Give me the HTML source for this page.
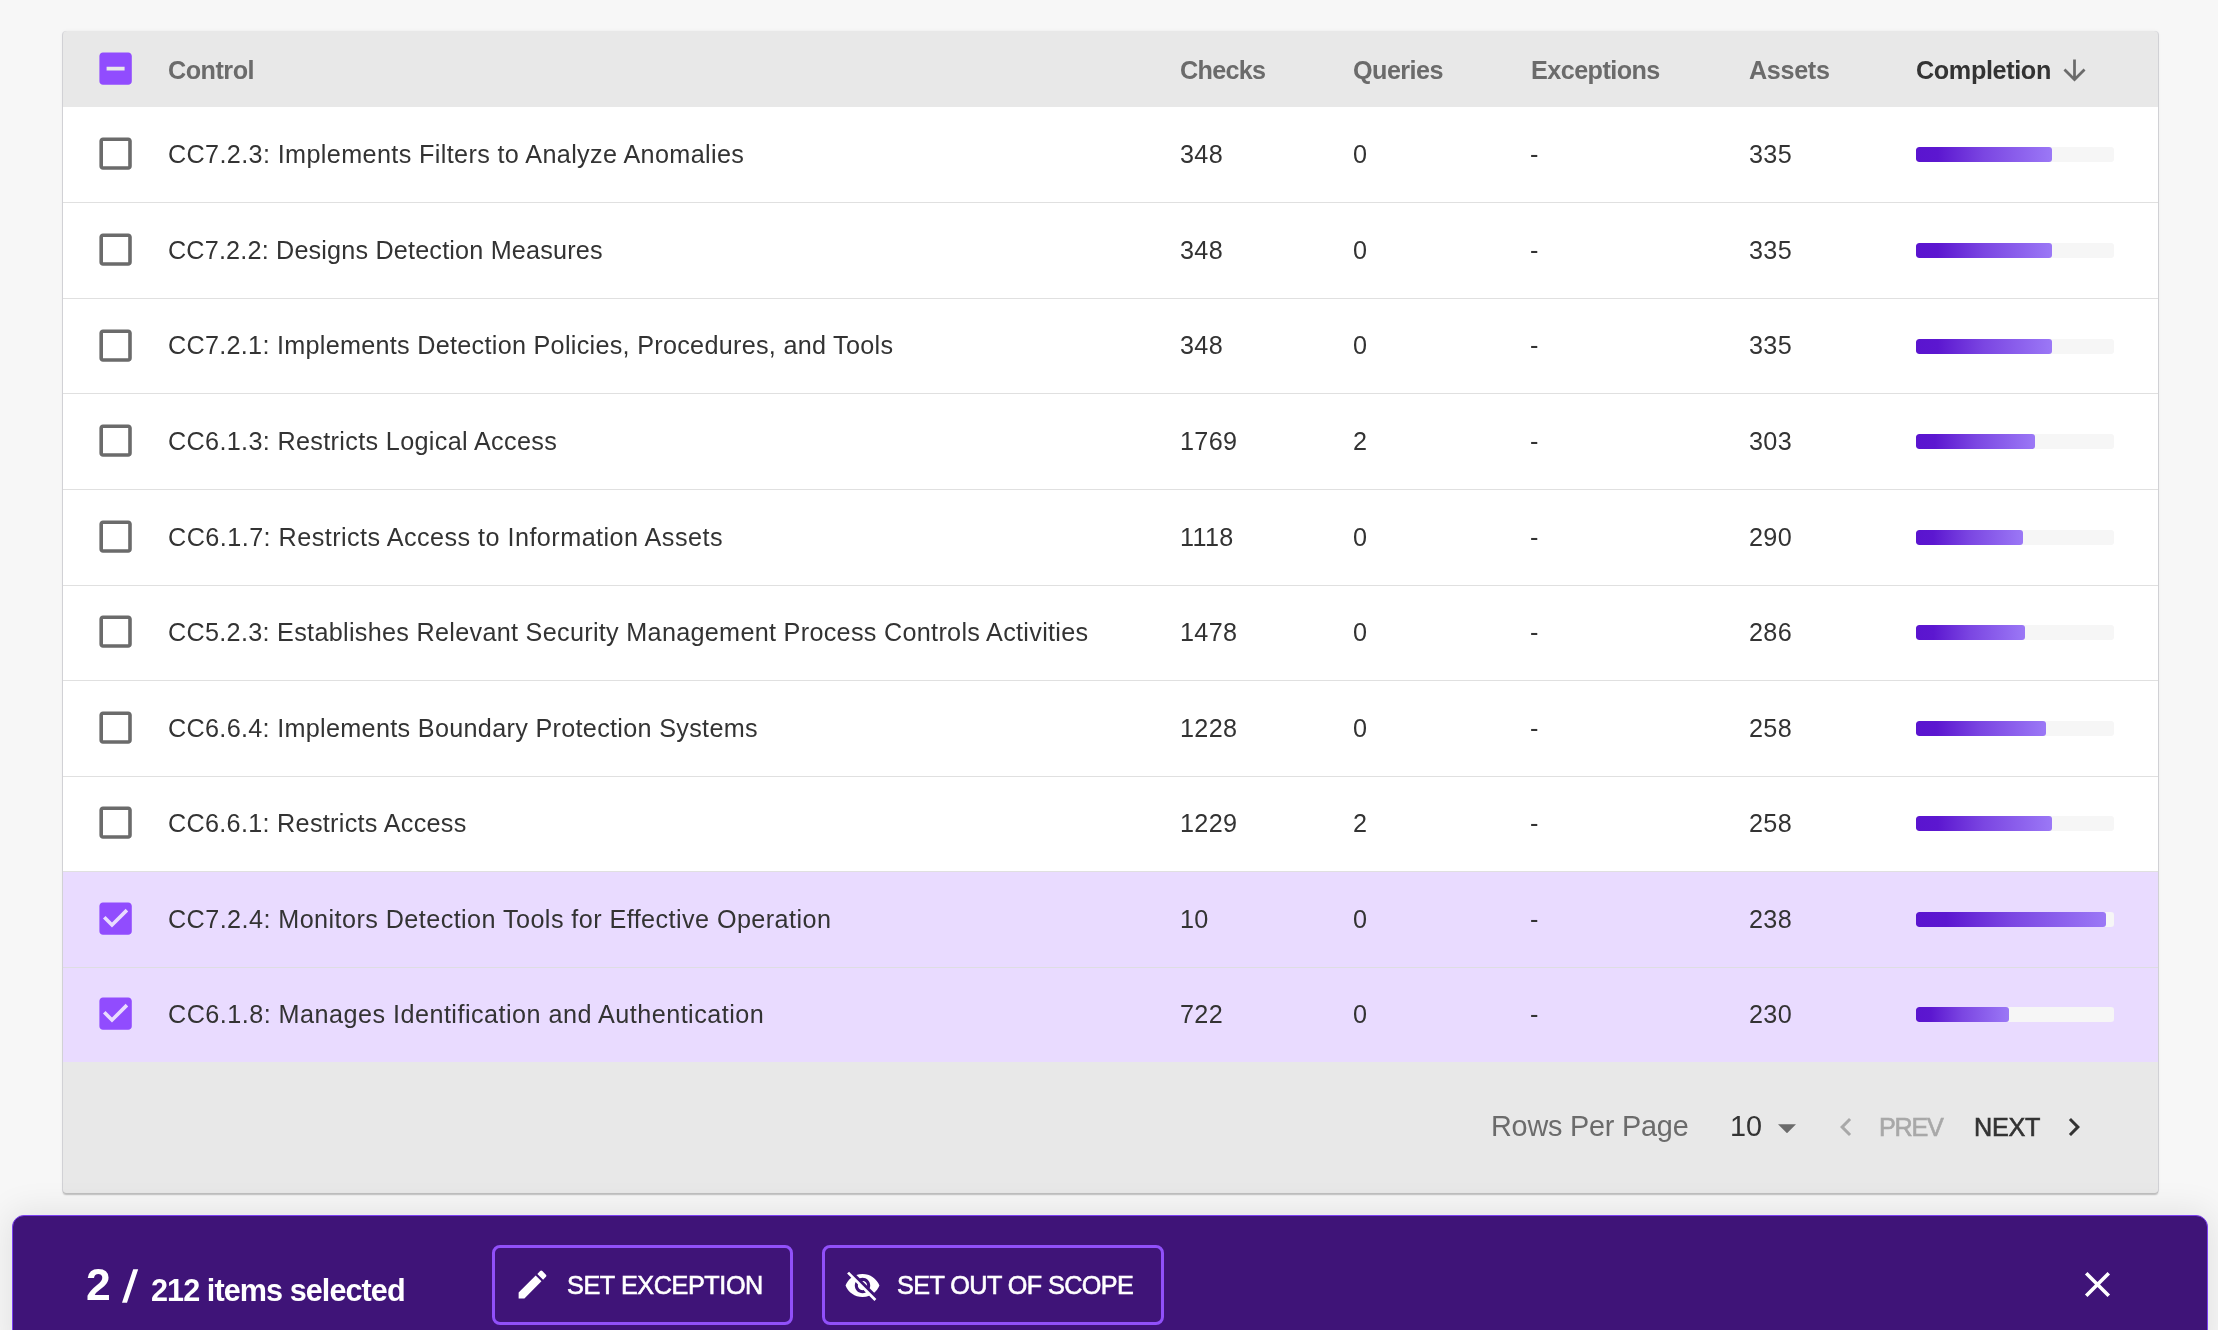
<!DOCTYPE html>
<html><head><meta charset="utf-8"><style>
html,body{margin:0;padding:0;}
body{width:2218px;height:1330px;overflow:hidden;background:#f7f7f7;position:relative;font-family:"Liberation Sans", sans-serif;}
.t{position:absolute;white-space:nowrap;line-height:1;will-change:transform;}
.ic{position:absolute;}
.abs{position:absolute;}
</style></head><body>
<div class="abs" style="left:63px;top:31px;width:2095px;height:1162px;background:#e8e8e8;border-radius:4px 4px 3px 3px;box-shadow:1px 0 0 0 rgba(40,40,70,0.12),-1px 0 0 0 rgba(40,40,70,0.12),0 1.5px 1.5px 0 rgba(0,0,0,0.22),0 0 4px 0 rgba(0,0,0,0.04);overflow:hidden">
<div class="abs" style="left:0;top:76.00px;width:2095px;height:95.55px;background:#ffffff;"></div>
<div class="abs" style="left:0;top:171.55px;width:2095px;height:95.55px;background:#ffffff;"></div>
<div class="abs" style="left:0;top:267.10px;width:2095px;height:95.55px;background:#ffffff;"></div>
<div class="abs" style="left:0;top:362.65px;width:2095px;height:95.55px;background:#ffffff;"></div>
<div class="abs" style="left:0;top:458.20px;width:2095px;height:95.55px;background:#ffffff;"></div>
<div class="abs" style="left:0;top:553.75px;width:2095px;height:95.55px;background:#ffffff;"></div>
<div class="abs" style="left:0;top:649.30px;width:2095px;height:95.55px;background:#ffffff;"></div>
<div class="abs" style="left:0;top:744.85px;width:2095px;height:95.55px;background:#ffffff;"></div>
<div class="abs" style="left:0;top:840.40px;width:2095px;height:95.55px;background:#e9dbff;"></div>
<div class="abs" style="left:0;top:935.95px;width:2095px;height:95.55px;background:#e9dbff;"></div>
<div class="abs" style="left:0;top:171px;width:2095px;height:1px;background:#e0e0e0;"></div>
<div class="abs" style="left:0;top:267px;width:2095px;height:1px;background:#e0e0e0;"></div>
<div class="abs" style="left:0;top:362px;width:2095px;height:1px;background:#e0e0e0;"></div>
<div class="abs" style="left:0;top:458px;width:2095px;height:1px;background:#e0e0e0;"></div>
<div class="abs" style="left:0;top:554px;width:2095px;height:1px;background:#e0e0e0;"></div>
<div class="abs" style="left:0;top:649px;width:2095px;height:1px;background:#e0e0e0;"></div>
<div class="abs" style="left:0;top:745px;width:2095px;height:1px;background:#e0e0e0;"></div>
<div class="abs" style="left:0;top:840px;width:2095px;height:1px;background:#e0e0e0;"></div>
<div class="abs" style="left:0;top:936px;width:2095px;height:1px;background:#dedde2;"></div>
</div>
<svg class="ic" style="left:94.20px;top:46.90px;width:43.2px;height:43.2px" viewBox="0 0 24 24"><path fill="#914cfe" d="M19 3H5c-1.1 0-2 .9-2 2v14c0 1.1.9 2 2 2h14c1.1 0 2-.9 2-2V5c0-1.1-.9-2-2-2zm-2 10H7v-2h10v2z"/></svg>
<div class="t" style="left:168px;top:58.01px;font-size:25.2px;color:#6b6b6b;font-weight:700;letter-spacing:-0.5px;">Control</div>
<div class="t" style="left:1180px;top:58.01px;font-size:25.2px;color:#6b6b6b;font-weight:700;letter-spacing:-0.7px;">Checks</div>
<div class="t" style="left:1353px;top:58.01px;font-size:25.2px;color:#6b6b6b;font-weight:700;letter-spacing:-0.55px;">Queries</div>
<div class="t" style="left:1531px;top:58.01px;font-size:25.2px;color:#6b6b6b;font-weight:700;letter-spacing:-0.56px;">Exceptions</div>
<div class="t" style="left:1749px;top:58.01px;font-size:25.2px;color:#6b6b6b;font-weight:700;letter-spacing:-0.34px;">Assets</div>
<div class="t" style="left:1916px;top:58.01px;font-size:25.2px;color:#333333;font-weight:700;letter-spacing:-0.36px;">Completion</div>
<svg class="ic" style="left:2057.7px;top:54.1px;width:33px;height:33px" viewBox="0 0 24 24"><path fill="#6b6b6b" d="M20 12l-1.41-1.41L13 16.17V4h-2v12.17l-5.58-5.59L4 12l8 8 8-8z"/></svg>
<svg class="ic" style="left:94.20px;top:132.48px;width:43.2px;height:43.2px" viewBox="0 0 24 24"><path fill="#6b6b6b" d="M19 5v14H5V5h14m0-2H5c-1.11 0-2 .9-2 2v14c0 1.1.89 2 2 2h14c1.11 0 2-.9 2-2V5c0-1.1-.89-2-2-2z"/></svg>
<div class="t" style="left:168px;top:142.31px;font-size:25.2px;color:#333333;font-weight:400;letter-spacing:0.37px;">CC7.2.3: Implements Filters to Analyze Anomalies</div>
<div class="t" style="left:1180px;top:142.31px;font-size:25.2px;color:#333333;font-weight:400;letter-spacing:0.35px;">348</div>
<div class="t" style="left:1353px;top:142.31px;font-size:25.2px;color:#333333;font-weight:400;letter-spacing:0.35px;">0</div>
<div class="t" style="left:1530px;top:142.31px;font-size:25.2px;color:#333333;font-weight:400;letter-spacing:0px;">-</div>
<div class="t" style="left:1749px;top:142.31px;font-size:25.2px;color:#333333;font-weight:400;letter-spacing:0.35px;">335</div>
<div class="abs" style="left:1916px;top:147.00px;width:198px;height:15px;background:#f6f6f6;border-radius:3px;overflow:hidden"><div class="abs" style="left:0;top:0;height:15px;width:136px;border-radius:3px;background:linear-gradient(90deg,#5a14cf 0%,#5c17d0 16%,#7b46e2 50%,#9b78f6 100%);"></div></div>
<svg class="ic" style="left:94.20px;top:228.03px;width:43.2px;height:43.2px" viewBox="0 0 24 24"><path fill="#6b6b6b" d="M19 5v14H5V5h14m0-2H5c-1.11 0-2 .9-2 2v14c0 1.1.89 2 2 2h14c1.11 0 2-.9 2-2V5c0-1.1-.89-2-2-2z"/></svg>
<div class="t" style="left:168px;top:237.86px;font-size:25.2px;color:#333333;font-weight:400;letter-spacing:0.18px;">CC7.2.2: Designs Detection Measures</div>
<div class="t" style="left:1180px;top:237.86px;font-size:25.2px;color:#333333;font-weight:400;letter-spacing:0.35px;">348</div>
<div class="t" style="left:1353px;top:237.86px;font-size:25.2px;color:#333333;font-weight:400;letter-spacing:0.35px;">0</div>
<div class="t" style="left:1530px;top:237.86px;font-size:25.2px;color:#333333;font-weight:400;letter-spacing:0px;">-</div>
<div class="t" style="left:1749px;top:237.86px;font-size:25.2px;color:#333333;font-weight:400;letter-spacing:0.35px;">335</div>
<div class="abs" style="left:1916px;top:243.00px;width:198px;height:15px;background:#f6f6f6;border-radius:3px;overflow:hidden"><div class="abs" style="left:0;top:0;height:15px;width:136px;border-radius:3px;background:linear-gradient(90deg,#5a14cf 0%,#5c17d0 16%,#7b46e2 50%,#9b78f6 100%);"></div></div>
<svg class="ic" style="left:94.20px;top:323.57px;width:43.2px;height:43.2px" viewBox="0 0 24 24"><path fill="#6b6b6b" d="M19 5v14H5V5h14m0-2H5c-1.11 0-2 .9-2 2v14c0 1.1.89 2 2 2h14c1.11 0 2-.9 2-2V5c0-1.1-.89-2-2-2z"/></svg>
<div class="t" style="left:168px;top:333.41px;font-size:25.2px;color:#333333;font-weight:400;letter-spacing:0.285px;">CC7.2.1: Implements Detection Policies, Procedures, and Tools</div>
<div class="t" style="left:1180px;top:333.41px;font-size:25.2px;color:#333333;font-weight:400;letter-spacing:0.35px;">348</div>
<div class="t" style="left:1353px;top:333.41px;font-size:25.2px;color:#333333;font-weight:400;letter-spacing:0.35px;">0</div>
<div class="t" style="left:1530px;top:333.41px;font-size:25.2px;color:#333333;font-weight:400;letter-spacing:0px;">-</div>
<div class="t" style="left:1749px;top:333.41px;font-size:25.2px;color:#333333;font-weight:400;letter-spacing:0.35px;">335</div>
<div class="abs" style="left:1916px;top:339.00px;width:198px;height:15px;background:#f6f6f6;border-radius:3px;overflow:hidden"><div class="abs" style="left:0;top:0;height:15px;width:136px;border-radius:3px;background:linear-gradient(90deg,#5a14cf 0%,#5c17d0 16%,#7b46e2 50%,#9b78f6 100%);"></div></div>
<svg class="ic" style="left:94.20px;top:419.12px;width:43.2px;height:43.2px" viewBox="0 0 24 24"><path fill="#6b6b6b" d="M19 5v14H5V5h14m0-2H5c-1.11 0-2 .9-2 2v14c0 1.1.89 2 2 2h14c1.11 0 2-.9 2-2V5c0-1.1-.89-2-2-2z"/></svg>
<div class="t" style="left:168px;top:428.96px;font-size:25.2px;color:#333333;font-weight:400;letter-spacing:0.34px;">CC6.1.3: Restricts Logical Access</div>
<div class="t" style="left:1180px;top:428.96px;font-size:25.2px;color:#333333;font-weight:400;letter-spacing:0.35px;">1769</div>
<div class="t" style="left:1353px;top:428.96px;font-size:25.2px;color:#333333;font-weight:400;letter-spacing:0.35px;">2</div>
<div class="t" style="left:1530px;top:428.96px;font-size:25.2px;color:#333333;font-weight:400;letter-spacing:0px;">-</div>
<div class="t" style="left:1749px;top:428.96px;font-size:25.2px;color:#333333;font-weight:400;letter-spacing:0.35px;">303</div>
<div class="abs" style="left:1916px;top:434.00px;width:198px;height:15px;background:#f6f6f6;border-radius:3px;overflow:hidden"><div class="abs" style="left:0;top:0;height:15px;width:119px;border-radius:3px;background:linear-gradient(90deg,#5a14cf 0%,#5c17d0 16%,#7b46e2 50%,#9b78f6 100%);"></div></div>
<svg class="ic" style="left:94.20px;top:514.67px;width:43.2px;height:43.2px" viewBox="0 0 24 24"><path fill="#6b6b6b" d="M19 5v14H5V5h14m0-2H5c-1.11 0-2 .9-2 2v14c0 1.1.89 2 2 2h14c1.11 0 2-.9 2-2V5c0-1.1-.89-2-2-2z"/></svg>
<div class="t" style="left:168px;top:524.51px;font-size:25.2px;color:#333333;font-weight:400;letter-spacing:0.46px;">CC6.1.7: Restricts Access to Information Assets</div>
<div class="t" style="left:1180px;top:524.51px;font-size:25.2px;color:#333333;font-weight:400;letter-spacing:0.35px;">1118</div>
<div class="t" style="left:1353px;top:524.51px;font-size:25.2px;color:#333333;font-weight:400;letter-spacing:0.35px;">0</div>
<div class="t" style="left:1530px;top:524.51px;font-size:25.2px;color:#333333;font-weight:400;letter-spacing:0px;">-</div>
<div class="t" style="left:1749px;top:524.51px;font-size:25.2px;color:#333333;font-weight:400;letter-spacing:0.35px;">290</div>
<div class="abs" style="left:1916px;top:530.00px;width:198px;height:15px;background:#f6f6f6;border-radius:3px;overflow:hidden"><div class="abs" style="left:0;top:0;height:15px;width:107px;border-radius:3px;background:linear-gradient(90deg,#5a14cf 0%,#5c17d0 16%,#7b46e2 50%,#9b78f6 100%);"></div></div>
<svg class="ic" style="left:94.20px;top:610.22px;width:43.2px;height:43.2px" viewBox="0 0 24 24"><path fill="#6b6b6b" d="M19 5v14H5V5h14m0-2H5c-1.11 0-2 .9-2 2v14c0 1.1.89 2 2 2h14c1.11 0 2-.9 2-2V5c0-1.1-.89-2-2-2z"/></svg>
<div class="t" style="left:168px;top:620.06px;font-size:25.2px;color:#333333;font-weight:400;letter-spacing:0.3px;">CC5.2.3: Establishes Relevant Security Management Process Controls Activities</div>
<div class="t" style="left:1180px;top:620.06px;font-size:25.2px;color:#333333;font-weight:400;letter-spacing:0.35px;">1478</div>
<div class="t" style="left:1353px;top:620.06px;font-size:25.2px;color:#333333;font-weight:400;letter-spacing:0.35px;">0</div>
<div class="t" style="left:1530px;top:620.06px;font-size:25.2px;color:#333333;font-weight:400;letter-spacing:0px;">-</div>
<div class="t" style="left:1749px;top:620.06px;font-size:25.2px;color:#333333;font-weight:400;letter-spacing:0.35px;">286</div>
<div class="abs" style="left:1916px;top:625.00px;width:198px;height:15px;background:#f6f6f6;border-radius:3px;overflow:hidden"><div class="abs" style="left:0;top:0;height:15px;width:109px;border-radius:3px;background:linear-gradient(90deg,#5a14cf 0%,#5c17d0 16%,#7b46e2 50%,#9b78f6 100%);"></div></div>
<svg class="ic" style="left:94.20px;top:705.77px;width:43.2px;height:43.2px" viewBox="0 0 24 24"><path fill="#6b6b6b" d="M19 5v14H5V5h14m0-2H5c-1.11 0-2 .9-2 2v14c0 1.1.89 2 2 2h14c1.11 0 2-.9 2-2V5c0-1.1-.89-2-2-2z"/></svg>
<div class="t" style="left:168px;top:715.61px;font-size:25.2px;color:#333333;font-weight:400;letter-spacing:0.31px;">CC6.6.4: Implements Boundary Protection Systems</div>
<div class="t" style="left:1180px;top:715.61px;font-size:25.2px;color:#333333;font-weight:400;letter-spacing:0.35px;">1228</div>
<div class="t" style="left:1353px;top:715.61px;font-size:25.2px;color:#333333;font-weight:400;letter-spacing:0.35px;">0</div>
<div class="t" style="left:1530px;top:715.61px;font-size:25.2px;color:#333333;font-weight:400;letter-spacing:0px;">-</div>
<div class="t" style="left:1749px;top:715.61px;font-size:25.2px;color:#333333;font-weight:400;letter-spacing:0.35px;">258</div>
<div class="abs" style="left:1916px;top:721.00px;width:198px;height:15px;background:#f6f6f6;border-radius:3px;overflow:hidden"><div class="abs" style="left:0;top:0;height:15px;width:130px;border-radius:3px;background:linear-gradient(90deg,#5a14cf 0%,#5c17d0 16%,#7b46e2 50%,#9b78f6 100%);"></div></div>
<svg class="ic" style="left:94.20px;top:801.32px;width:43.2px;height:43.2px" viewBox="0 0 24 24"><path fill="#6b6b6b" d="M19 5v14H5V5h14m0-2H5c-1.11 0-2 .9-2 2v14c0 1.1.89 2 2 2h14c1.11 0 2-.9 2-2V5c0-1.1-.89-2-2-2z"/></svg>
<div class="t" style="left:168px;top:811.16px;font-size:25.2px;color:#333333;font-weight:400;letter-spacing:0.3px;">CC6.6.1: Restricts Access</div>
<div class="t" style="left:1180px;top:811.16px;font-size:25.2px;color:#333333;font-weight:400;letter-spacing:0.35px;">1229</div>
<div class="t" style="left:1353px;top:811.16px;font-size:25.2px;color:#333333;font-weight:400;letter-spacing:0.35px;">2</div>
<div class="t" style="left:1530px;top:811.16px;font-size:25.2px;color:#333333;font-weight:400;letter-spacing:0px;">-</div>
<div class="t" style="left:1749px;top:811.16px;font-size:25.2px;color:#333333;font-weight:400;letter-spacing:0.35px;">258</div>
<div class="abs" style="left:1916px;top:816.00px;width:198px;height:15px;background:#f6f6f6;border-radius:3px;overflow:hidden"><div class="abs" style="left:0;top:0;height:15px;width:136px;border-radius:3px;background:linear-gradient(90deg,#5a14cf 0%,#5c17d0 16%,#7b46e2 50%,#9b78f6 100%);"></div></div>
<svg class="ic" style="left:94.20px;top:896.87px;width:43.2px;height:43.2px" viewBox="0 0 24 24"><path fill="#914cfe" d="M19 3H5c-1.11 0-2 .9-2 2v14c0 1.1.89 2 2 2h14c1.11 0 2-.9 2-2V5c0-1.1-.89-2-2-2zm-9 14l-5-5 1.41-1.41L10 14.17l7.59-7.59L19 8l-9 9z"/></svg>
<div class="t" style="left:168px;top:906.71px;font-size:25.2px;color:#333333;font-weight:400;letter-spacing:0.43px;">CC7.2.4: Monitors Detection Tools for Effective Operation</div>
<div class="t" style="left:1180px;top:906.71px;font-size:25.2px;color:#333333;font-weight:400;letter-spacing:0.35px;">10</div>
<div class="t" style="left:1353px;top:906.71px;font-size:25.2px;color:#333333;font-weight:400;letter-spacing:0.35px;">0</div>
<div class="t" style="left:1530px;top:906.71px;font-size:25.2px;color:#333333;font-weight:400;letter-spacing:0px;">-</div>
<div class="t" style="left:1749px;top:906.71px;font-size:25.2px;color:#333333;font-weight:400;letter-spacing:0.35px;">238</div>
<div class="abs" style="left:1916px;top:912.00px;width:198px;height:15px;background:#f6f6f6;border-radius:3px;overflow:hidden"><div class="abs" style="left:0;top:0;height:15px;width:190px;border-radius:3px;background:linear-gradient(90deg,#5a14cf 0%,#5c17d0 16%,#7b46e2 50%,#9b78f6 100%);"></div></div>
<svg class="ic" style="left:94.20px;top:992.42px;width:43.2px;height:43.2px" viewBox="0 0 24 24"><path fill="#914cfe" d="M19 3H5c-1.11 0-2 .9-2 2v14c0 1.1.89 2 2 2h14c1.11 0 2-.9 2-2V5c0-1.1-.89-2-2-2zm-9 14l-5-5 1.41-1.41L10 14.17l7.59-7.59L19 8l-9 9z"/></svg>
<div class="t" style="left:168px;top:1002.26px;font-size:25.2px;color:#333333;font-weight:400;letter-spacing:0.47px;">CC6.1.8: Manages Identification and Authentication</div>
<div class="t" style="left:1180px;top:1002.26px;font-size:25.2px;color:#333333;font-weight:400;letter-spacing:0.35px;">722</div>
<div class="t" style="left:1353px;top:1002.26px;font-size:25.2px;color:#333333;font-weight:400;letter-spacing:0.35px;">0</div>
<div class="t" style="left:1530px;top:1002.26px;font-size:25.2px;color:#333333;font-weight:400;letter-spacing:0px;">-</div>
<div class="t" style="left:1749px;top:1002.26px;font-size:25.2px;color:#333333;font-weight:400;letter-spacing:0.35px;">230</div>
<div class="abs" style="left:1916px;top:1007.00px;width:198px;height:15px;background:#f6f6f6;border-radius:3px;overflow:hidden"><div class="abs" style="left:0;top:0;height:15px;width:93px;border-radius:3px;background:linear-gradient(90deg,#5a14cf 0%,#5c17d0 16%,#7b46e2 50%,#9b78f6 100%);"></div></div>
<div class="t" style="left:1491px;top:1112.34px;font-size:28.8px;color:#6b6b6b;font-weight:400;letter-spacing:-0.2px;">Rows Per Page</div>
<div class="t" style="left:1729.5px;top:1112.34px;font-size:28.8px;color:#333333;font-weight:400;letter-spacing:0px;">10</div>
<svg class="ic" style="left:1777.5px;top:1123.5px;width:18px;height:9.5px" viewBox="0 0 10 5"><path fill="#6b6b6b" d="M0 0l5 5 5-5z"/></svg>
<svg class="ic" style="left:1828.2px;top:1109.3px;width:36px;height:36px" viewBox="0 0 24 24"><path fill="#a8a8a8" d="M15.41 7.41L14 6l-6 6 6 6 1.41-1.41L10.83 12z"/></svg>
<div class="t" style="left:1879px;top:1115.01px;font-size:25.2px;color:#a8a8a8;font-weight:400;letter-spacing:-1.27px;-webkit-text-stroke:0.6px #a8a8a8;">PREV</div>
<div class="t" style="left:1974px;top:1115.01px;font-size:25.2px;color:#333333;font-weight:400;letter-spacing:-0.27px;-webkit-text-stroke:0.6px #333333;">NEXT</div>
<svg class="ic" style="left:2056.1px;top:1109.3px;width:36px;height:36px" viewBox="0 0 24 24"><path fill="#333333" d="M10 6L8.59 7.41 13.17 12l-4.58 4.59L10 18l6-6z"/></svg>
<div class="abs" style="left:12px;top:1215px;width:2196px;height:140px;background:#3f1478;border:1.5px solid #7a3ff0;border-radius:12px;box-sizing:border-box;box-shadow:0 0 34px 4px rgba(0,0,0,0.085)"></div>
<div class="t" style="left:86px;top:1262.59px;font-size:44.5px;color:#ffffff;font-weight:700;letter-spacing:0px;">2</div>
<svg class="ic" style="left:0;top:0;width:200px;height:1330px" viewBox="0 0 200 1330"><polygon fill="#ffffff" points="133.2,1269.2 138.2,1269.2 127.0,1302.8 122.0,1302.8"/></svg>
<div class="t" style="left:151px;top:1274.71px;font-size:30.6px;color:#ffffff;font-weight:700;letter-spacing:-0.93px;">212 items selected</div>
<div class="abs" style="left:492px;top:1245px;width:301px;height:80px;border:3px solid #9150fa;border-radius:8px;box-sizing:border-box"></div>
<svg class="ic" style="left:514px;top:1266px;width:37px;height:37px" viewBox="0 0 24 24"><path fill="#ffffff" d="M3 17.25V21h3.75L17.81 9.94l-3.75-3.75L3 17.25zM20.71 7.04c.39-.39.39-1.02 0-1.41l-2.34-2.34a.9959.9959 0 0 0-1.41 0l-1.83 1.83 3.75 3.75 1.83-1.83z"/></svg>
<div class="t" style="left:566.5px;top:1272.71px;font-size:25.2px;color:#ffffff;font-weight:400;letter-spacing:-0.4px;-webkit-text-stroke:0.6px #fff;">SET EXCEPTION</div>
<div class="abs" style="left:822px;top:1245px;width:342px;height:80px;border:3px solid #9150fa;border-radius:8px;box-sizing:border-box"></div>
<svg class="ic" style="left:844px;top:1267px;width:37px;height:37px" viewBox="0 0 24 24"><path fill="#ffffff" d="M12 7c2.76 0 5 2.24 5 5 0 .65-.13 1.26-.36 1.83l2.92 2.92c1.51-1.26 2.7-2.89 3.43-4.75-1.73-4.39-6-7.5-11-7.5-1.4 0-2.74.25-3.98.7l2.16 2.16C10.74 7.13 11.35 7 12 7zM2 4.27l2.28 2.28.46.46C3.08 8.3 1.78 10.02 1 12c1.73 4.39 6 7.5 11 7.5 1.55 0 3.03-.3 4.38-.84l.42.42L19.73 22 21 20.73 3.27 3 2 4.27zM7.53 9.8l1.55 1.55c-.05.21-.08.43-.08.65 0 1.66 1.34 3 3 3 .22 0 .44-.03.65-.08l1.55 1.55c-.67.33-1.41.53-2.2.53-2.76 0-5-2.24-5-5 0-.79.2-1.53.53-2.2zm4.31-.78l3.15 3.15.02-.16c0-1.66-1.34-3-3-3l-.17.01z"/></svg>
<div class="t" style="left:897px;top:1272.71px;font-size:25.2px;color:#ffffff;font-weight:400;letter-spacing:-0.57px;-webkit-text-stroke:0.6px #fff;">SET OUT OF SCOPE</div>
<svg class="ic" style="left:2076px;top:1263.2px;width:43px;height:43px" viewBox="0 0 24 24"><path fill="#ffffff" d="M19 6.41L17.59 5 12 10.59 6.41 5 5 6.41 10.59 12 5 17.59 6.41 19 12 13.41 17.59 19 19 17.59 13.41 12z"/></svg>
</body></html>
